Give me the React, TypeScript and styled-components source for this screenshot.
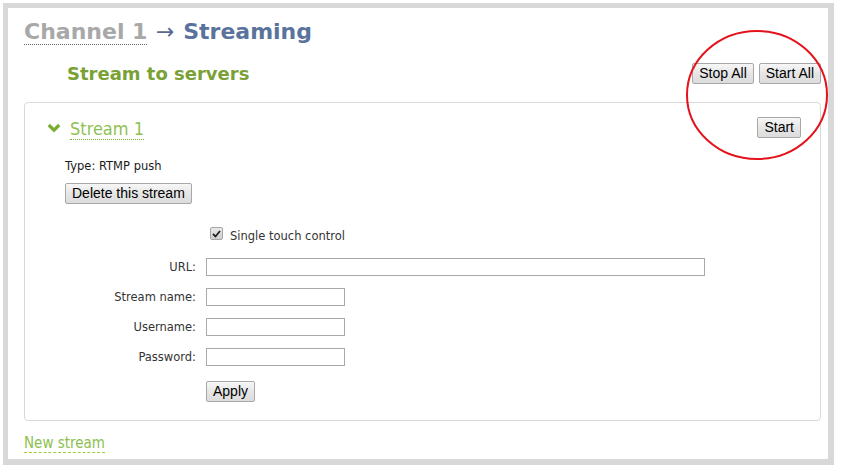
import React from "react";
import styled, { createGlobalStyle } from "styled-components";

const GlobalStyle = createGlobalStyle`
  html, body { margin: 0; padding: 0; background: #ffffff; }
  body { font-family: "DejaVu Sans", Verdana, sans-serif; color: #222; }
  * { box-sizing: border-box; }
`;

const Frame = styled.div`
  position: relative;
  margin: 3px 0 0 3px;
  width: 831px;
  height: 462px;
  border-style: solid;
  border-color: #d8d8d8;
  border-width: 5px 6px 6px 5px;
  padding: 11px 7px 0 16px;
  background: #fff;
  display: flex;
  flex-direction: column;
`;

const Title = styled.h1`
  margin: 0;
  font-family: "DejaVu Sans", Verdana, sans-serif;
  font-weight: bold;
  font-size: 22px;
  line-height: 26px;
  color: #5a739c;
  white-space: nowrap;
`;

const Crumb = styled.span`
  color: #a8a8a8;
  border-bottom: 1px dotted #666;
`;

const Arrow = styled.span`
  font-weight: normal;
  color: #56698f;
  margin: 0 1px;
`;

const HeadRow = styled.div`
  margin-top: 18px;
  height: 21px;
  display: flex;
  align-items: center;
  justify-content: space-between;
`;

const SectionTitle = styled.h2`
  margin: 0 0 0 43px;
  font-family: "DejaVu Sans", Verdana, sans-serif;
  font-weight: bold;
  font-size: 18px;
  line-height: 21px;
  color: #79a135;
`;

const ButtonGroup = styled.div`
  display: flex;
  gap: 5px;
`;

const Button = styled.button`
  height: 21px;
  padding: 0 6px;
  border: 1px solid #a8a8a8;
  border-radius: 2px;
  background: linear-gradient(#f7f7f7, #e6e6e6 50%, #dcdcdc);
  font-family: "Liberation Sans", Arial, sans-serif;
  font-size: 14px;
  line-height: 19px;
  color: #000;
  white-space: nowrap;
  cursor: pointer;
`;

const Card = styled.div`
  margin-top: 18px;
  border: 1px solid #d9d9d9;
  border-radius: 4px;
  padding: 14px 19px 18px 22px;
`;

const CardHeader = styled.div`
  height: 21px;
  display: flex;
  align-items: center;
`;

const Chevron = styled.svg`
  width: 14px;
  height: 10px;
  margin-right: 9px;
  flex: none;
`;

const StreamName = styled.span`
  font-family: "DejaVu Sans Condensed", "DejaVu Sans", sans-serif;
  font-size: 18px;
  line-height: 21px;
  color: #8fc152;
  border-bottom: 1px dotted #7aa83a;
  margin-top: 2px;
`;

const Spacer = styled.div`
  flex: 1;
`;

const CardBody = styled.div`
  padding-left: 18px;
`;

const TypeLine = styled.div`
  margin-top: 21px;
  font-size: 11.5px;
  line-height: 14px;
  color: #1a1a1a;
`;

const DeleteRow = styled.div`
  margin-top: 10px;
`;

const Form = styled.div`
  margin-top: 23px;
  display: grid;
  grid-template-columns: 131px auto;
  column-gap: 10px;
  row-gap: 12px;
  align-items: center;
  justify-items: start;
`;

const Label = styled.label`
  justify-self: end;
  font-size: 11.5px;
  color: #333;
  white-space: nowrap;
`;

const CheckRow = styled.div`
  grid-column: 2;
  height: 19px;
  margin-left: 4px;
  display: flex;
  align-items: flex-start;
  gap: 7px;
  align-self: start;
`;

const CheckBox = styled.span`
  width: 13px;
  height: 13px;
  border: 1px solid #a6a6a6;
  border-radius: 2px;
  background: linear-gradient(#e8e8e8, #d0d0d0);
  display: flex;
  align-items: center;
  justify-content: center;
  flex: none;
`;

const CheckText = styled.span`
  font-size: 11.5px;
  line-height: 20px;
  margin-top: -1px;
  color: #333;
`;

const Input = styled.input<{ $wide?: boolean }>`
  width: ${(p) => (p.$wide ? "499px" : "139px")};
  height: 18px;
  border: 1px solid #a9a9a9;
  border-radius: 0;
  padding: 0 3px;
  font-size: 11px;
  outline: none;
  background: #fff;
`;

const ApplyCell = styled.div`
  grid-column: 2;
  margin-top: 3px;
`;

const NewStream = styled.div`
  margin-top: 12px;
`;

const NewLink = styled.a`
  font-family: "DejaVu Sans Condensed", "DejaVu Sans", sans-serif;
  font-size: 15px;
  color: #8cbf4e;
  text-decoration: none;
  border-bottom: 1px dashed #9ccc3a;
  cursor: pointer;
`;

const Annotation = styled.svg`
  position: absolute;
  left: 678px;
  top: 22px;
  width: 142px;
  height: 130px;
  pointer-events: none;
  overflow: visible;
`;

export default function App() {
  return (
    <>
      <GlobalStyle />
      <Frame>
        <Title>
          <Crumb>Channel 1</Crumb> <Arrow>→</Arrow> Streaming
        </Title>
        <HeadRow>
          <SectionTitle>Stream to servers</SectionTitle>
          <ButtonGroup>
            <Button>Stop All</Button>
            <Button>Start All</Button>
          </ButtonGroup>
        </HeadRow>
        <Card>
          <CardHeader>
            <Chevron viewBox="0 0 14 10">
              <polyline
                points="1.8,2 7,7.2 12.2,2"
                fill="none"
                stroke="#7aae2f"
                strokeWidth="3.2"
                strokeLinecap="butt"
                strokeLinejoin="miter"
              />
            </Chevron>
            <StreamName>Stream 1</StreamName>
            <Spacer />
            <Button>Start</Button>
          </CardHeader>
          <CardBody>
            <TypeLine>Type: RTMP push</TypeLine>
            <DeleteRow>
              <Button>Delete this stream</Button>
            </DeleteRow>
            <Form>
              <CheckRow>
                <CheckBox>
                  <svg width="9" height="8" viewBox="0 0 9 8">
                    <polyline
                      points="1,4 3.5,6.5 8,1"
                      fill="none"
                      stroke="#222"
                      strokeWidth="1.8"
                    />
                  </svg>
                </CheckBox>
                <CheckText>Single touch control</CheckText>
              </CheckRow>
              <Label>URL:</Label>
              <Input $wide />
              <Label>Stream name:</Label>
              <Input />
              <Label>Username:</Label>
              <Input />
              <Label>Password:</Label>
              <Input type="password" />
              <ApplyCell>
                <Button>Apply</Button>
              </ApplyCell>
            </Form>
          </CardBody>
        </Card>
        <NewStream>
          <NewLink>New stream</NewLink>
        </NewStream>
        <Annotation viewBox="0 0 142 130">
          <ellipse cx="71" cy="65" rx="70" ry="64" fill="none" stroke="#e3121b" strokeWidth="2" />
        </Annotation>
      </Frame>
    </>
  );
}
